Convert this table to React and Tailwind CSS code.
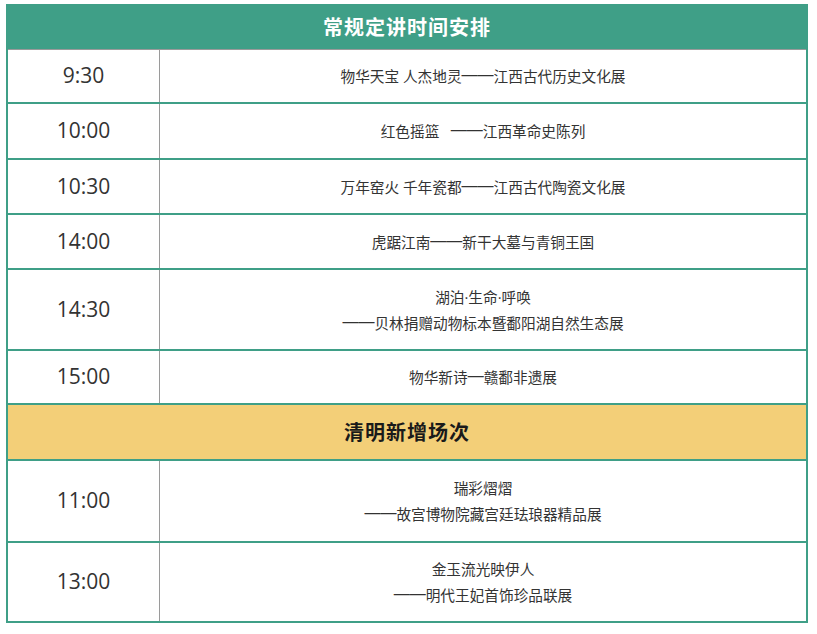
import React from "react";

const CJK = { fontFamily: '"Open Sans", "Noto Sans CJK SC", sans-serif' };

const rows = [
  { t: "9:30", h: "h-[55px] border-t border-t-[#9a9a9a]", lines: ["物华天宝 人杰地灵——江西古代历史文化展"] },
  { t: "10:00", h: "h-[56px]", lines: ["红色摇篮\u00a0\u00a0 ——江西革命史陈列"] },
  { t: "10:30", h: "h-[55px]", lines: ["万年窑火 千年瓷都——江西古代陶瓷文化展"] },
  { t: "14:00", h: "h-[55px]", lines: ["虎踞江南——新干大墓与青铜王国"] },
  { t: "14:30", h: "h-[81px]", lines: ["湖泊·生命·呼唤", "——贝林捐赠动物标本暨鄱阳湖自然生态展"] },
  { t: "15:00", h: "h-[54px]", lines: ["物华新诗—赣鄱非遗展"] },
];

const rows2 = [
  { t: "11:00", h: "h-[82px]", lines: ["瑞彩熠熠", "——故宫博物院藏宫廷珐琅器精品展"] },
  { t: "13:00", h: "h-[80px]", lines: ["金玉流光映伊人", "——明代王妃首饰珍品联展"] },
];

function Line({ text }) {
  const parts = text.split(/(—+)/);
  return (
    <div>
      {parts.map((p, i) =>
        p.startsWith("—") ? (
          <span key={i} className="font-['Liberation_Sans',sans-serif] text-[16px] leading-none relative top-[-2px]">
            {p}
          </span>
        ) : (
          <span key={i}>{p}</span>
        )
      )}
    </div>
  );
}

function Row({ r }) {
  return (
    <div className={`flex border-b-2 border-b-[#3f9f87] ${r.h}`}>
      <div
        className="w-[152px] shrink-0 border-r border-r-[#9a9a9a] flex items-center justify-center text-[21px] text-[#333]"
        style={{ fontFamily: '"Open Sans", sans-serif' }}
      >
        {r.t}
      </div>
      <div className="flex-1 flex flex-col items-center justify-center text-[14.67px] leading-[26px] text-[#333]" style={CJK}>
        {r.lines.map((l, i) => (
          <Line key={i} text={l} />
        ))}
      </div>
    </div>
  );
}

export default function App() {
  return (
    <div className="bg-white w-[817px] h-[634px] pt-[4px] pl-[6px]">
      <div className="w-[802px]">
        <div
          className="h-[45px] bg-[#3f9f87] flex items-center justify-center text-white font-bold text-[20px] tracking-[1px]"
          style={{ fontFamily: '"Noto Sans CJK SC", sans-serif' }}
        >
          常规定讲时间安排
        </div>
        <div className="border-x-2 border-x-[#3f9f87]">
          {rows.map((r) => (
            <Row key={r.t} r={r} />
          ))}
          <div
            className="h-[56px] bg-[#f3cf78] border-b-2 border-b-[#3f9f87] flex items-center justify-center text-[20px] font-bold tracking-[1px] text-[#1a1a1a]"
            style={{ fontFamily: '"Noto Sans CJK SC", sans-serif' }}
          >
            清明新增场次
          </div>
          {rows2.map((r) => (
            <Row key={r.t} r={r} />
          ))}
        </div>
      </div>
    </div>
  );
}
